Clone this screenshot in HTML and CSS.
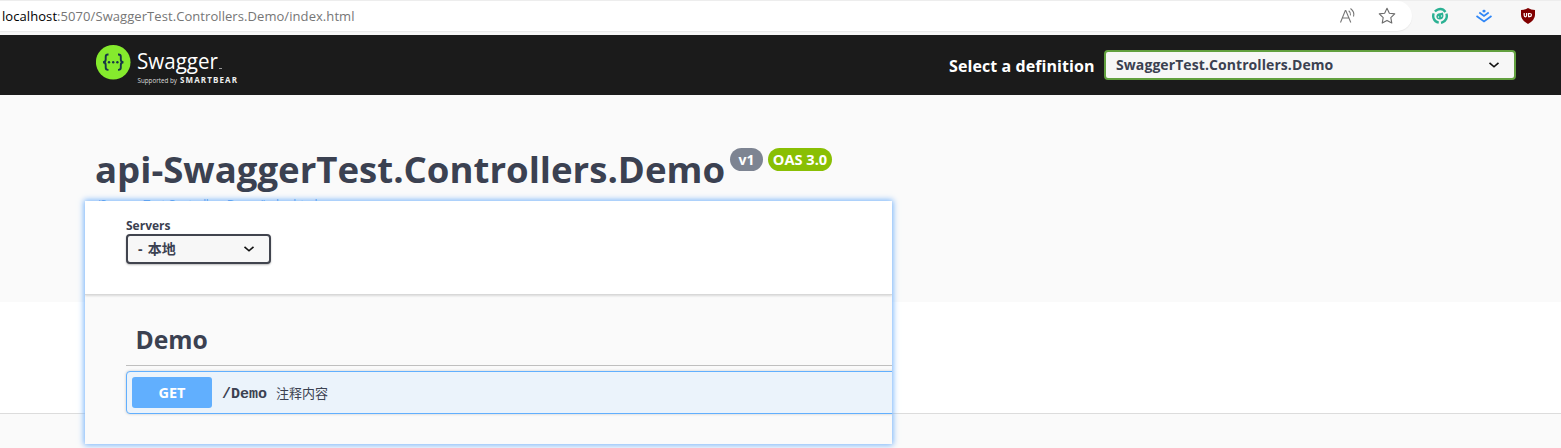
FILE: index.html
```html
<!DOCTYPE html>
<html lang="zh">
<head>
<meta charset="utf-8">
<title>Swagger UI</title>
<link rel="stylesheet" href="styles.css">
</head>
<body>
<div class="browser">
  <div class="address">
    <span class="url"><span class="host">localhost</span>:5070/SwaggerTest.Controllers.Demo/index.html</span>
    <svg class="read" width="18" height="18" viewBox="0 0 18 18" fill="none" stroke="#767676" stroke-width="1.1"><path d="M1.500 15.500 6.300 3.500h.5l5 12M3.300 11h7M9.700 3.800q2.300 1.700 1.800 4.500M11.500 1.500q4.500 3.500 3 8"/></svg>
    <svg class="star" width="18" height="18" viewBox="0 0 18 18" fill="none" stroke="#6b6b6b" stroke-width="1.100" stroke-linejoin="round"><path d="m9 1.300 2.350 4.900 5.400.700-3.950 3.750 1 5.400L9 13.400l-4.800 2.650 1-5.400L1.250 6.900l5.400-.7z"/></svg>
  </div>
  <div class="extensions">
    <svg width="18" height="18" viewBox="0 0 18 18"><circle cx="9" cy="9" r="6.800" fill="none" stroke="#2bb193" stroke-width="2.400" stroke-dasharray="12 2.240" transform="rotate(-20 9 9)"/><path d="M5.300 9.500Q6 6 9 6.300l3-.8.5 3.500q-.5 3.500-3.700 3.500T5.300 9.500z" fill="#2bb193"/><circle cx="7.500" cy="10" r=".7" fill="#f7f7f7"/><circle cx="10.500" cy="9" r=".7" fill="#f7f7f7"/></svg>
    <svg width="18" height="18" viewBox="0 0 18 18" fill="none" stroke="#2f86f6" stroke-width="1.700"><path d="M4.300 5.500 9 9l4.700-3.500M1.500 9 9 14.500 16.500 9"/><path d="m9 2.500 2 1.600-2 1.600-2-1.600z" fill="#2f86f6" stroke="none"/></svg>
    <svg width="18" height="18" viewBox="0 0 18 18"><path d="M9 1q3 2 7 2v5q0 5-7 9-7-4-7-9V3q4 0 7-2z" fill="#800000"/><path d="M5.200 6v2.300q0 1.500 1.200 1.500t1.200-1.500V6M9.600 6.500v3.200h1q1.800 0 1.800-1.600t-1.800-1.600z" fill="none" stroke="#fff" stroke-width="1.200"/></svg>
  </div>
</div>
<header class="topbar">
  <svg class="logo" width="144" height="44" viewBox="0 0 144 44">
    <circle cx="17.200" cy="19.200" r="17.300" fill="#85ea2d"/>
    <g fill="none" stroke="#173647" stroke-width="1.900"><path d="M12.500 11.500H12q-2.300 0-2.300 2.300v2.700q0 2.700-2.700 2.700 2.700 0 2.700 2.700v2.700q0 2.300 2.300 2.300h.5M22 11.500h.5q2.300 0 2.300 2.300v2.700q0 2.700 2.700 2.700-2.700 0-2.700 2.700v2.700q0 2.300-2.300 2.300H22"/></g>
    <g fill="#173647"><circle cx="13" cy="19.200" r="1.200"/><circle cx="17.200" cy="19.200" r="1.200"/><circle cx="21.400" cy="19.200" r="1.200"/></g>
    <text class="brand" x="41" y="26" textLength="81" lengthAdjust="spacingAndGlyphs">Swagger</text>
    <text class="support" x="41.500" y="40" textLength="39.500" lengthAdjust="spacingAndGlyphs">Supported by</text>
    <text class="bear" x="84" y="40" textLength="57" lengthAdjust="spacing">SMARTBEAR</text>
    <path d="M123 25.500h3" stroke="#999"/>
  </svg>
  <div class="definition">
    <span class="definition-label">Select a definition</span>
    <div class="select select-green"><span class="definition-value">SwaggerTest.Controllers.Demo</span><svg width="12" height="8" viewBox="0 0 12 8"><path d="m1.500 1.800 4.500 4 4.500-4" fill="none" stroke="#111" stroke-width="1.600"/></svg></div>
  </div>
</header>
<section class="info">
  <div class="heading"><h1>api-SwaggerTest.Controllers.Demo</h1><span class="badge">v1</span><span class="badge badge-oas">OAS 3.0</span></div>
  <div class="spec-link">/SwaggerTest.Controllers.Demo/index.html</div>
</section>
<section class="schemes"></section>
<div class="panel">
  <div class="servers">
    <span class="servers-label">Servers</span>
    <div class="select select-server"><span class="server-value">- 本地</span><svg width="12" height="8" viewBox="0 0 12 8"><path d="m1.500 1.800 4.500 4 4.500-4" fill="none" stroke="#111" stroke-width="1.600"/></svg></div>
  </div>
  <div class="operations">
    <h2><span>Demo</span></h2>
    <div class="operation"><span class="method">GET</span><span class="path">/Demo</span><span class="summary">注释内容</span></div>
  </div>
</div>
</body>
</html>
```
FILE: styles.css
```css
* { box-sizing: border-box; }
body { margin: 0; width: 1561px; height: 448px; overflow: hidden; position: relative; background: #fafafa; color: #3b4151; font-family: "Open Sans", "Noto Sans CJK SC", sans-serif; }
svg { display: block; flex: none; }
.browser { height: 35px; display: flex; background: #f7f7f7; border-top: 1px solid #ededed; }
.address { width: 1412px; height: 30px; display: flex; align-items: center; background: #fff; border-radius: 0 15px 15px 0; padding: 0 15px 0 2px; box-shadow: 0 1px 1px #e8e8e8; }
.url { flex: 1; font-size: 13px; color: #767676; white-space: nowrap; letter-spacing: .07px; }
.host { color: #000; }
.star { margin-left: 21px; margin-right: 1px; }
.extensions { display: flex; gap: 26px; height: 30px; align-items: center; padding-left: 19px; }
.topbar { height: 60px; background: #1b1b1b; display: flex; justify-content: space-between; padding: 8px 45px 8px 96px; }
.brand { font: 400 22px "Open Sans", sans-serif; fill: #fff; }
.support { font: 6.5px "Open Sans", sans-serif; fill: #ddd; }
.bear { font: 700 8px "Open Sans", sans-serif; fill: #eee; }
.definition { display: flex; align-items: center; gap: 10px; height: 44px; }
.definition-label { color: #fff; font-size: 16px; font-weight: 700; width: 145px; white-space: nowrap; letter-spacing: .08px; padding-top: 1px; }
.select { display: flex; align-items: center; justify-content: space-between; background: #f7f7f7; border: 2px solid #41444e; border-radius: 4px; height: 30px; font-weight: 700; font-size: 14px; padding: 0 14px 1px 10px; }
.select-green { border-color: #62a03f; width: 412px; padding-right: 14px; }
.definition-value { letter-spacing: .08px; }
.server-value { word-spacing: 1.5px; padding-bottom: 2px; }
.info { height: 207px; padding: 48px 95px 0; }
.heading { display: flex; align-items: flex-start; height: 54px; }
h1 { margin: 0; width: 635px; font-size: 36.6px; line-height: 52px; font-weight: 700; white-space: nowrap; }
.badge { margin-top: 5px; width: 33px; height: 23px; border-radius: 12px; background: #7d8492; color: #fff; font-size: 14px; line-height: 23px; font-weight: 700; text-align: center; white-space: nowrap; }
.badge-oas { width: 64px; margin-left: 5px; background: #89bf04; font-size: 14.6px; }
.spec-link { color: #4990e2; font-size: 12px; line-height: 16px; letter-spacing: -.5px; padding-left: 1px; }
.schemes { height: 112px; background: #fff; border-bottom: 1px solid #dcdcdc; }
.panel { position: absolute; left: 85px; top: 201px; width: 807px; height: 243px; background: #fafafa; box-shadow: 0 0 6px 1px #72b2fb; overflow: hidden; }
.servers { height: 94px; background: #fff; border-bottom: 1px solid #d8d8d8; box-shadow: 0 1px 2px #0002; padding: 17px 41px; }
.servers-label { display: block; height: 16px; line-height: 16px; font-size: 12px; font-weight: 700; }
.select-server { width: 145px; box-shadow: 0 1px 2px #0004; }
.operations { padding: 22px 0 0 41px; }
h2 { margin: 0 0 5px; height: 49px; padding-left: 9.5px; font-size: 24.7px; line-height: 46px; border-bottom: 1px solid #bfbfbf; }
.operation { height: 43px; width: 780px; display: flex; align-items: center; border: 1px solid #61affe; border-radius: 4px; background: #ebf3fb; box-shadow: 0 0 3px #0003; padding-left: 5px; }
.method { width: 80px; height: 31px; line-height: 31px; border-radius: 3px; background: #61affe; color: #fff; text-align: center; font-size: 14.5px; font-weight: 700; }
.path { width: 54px; margin-left: 10px; padding-top: 4px; font: 700 15px "Liberation Mono", monospace; }
.summary { font-size: 13px; padding-bottom: 1px; }
```
